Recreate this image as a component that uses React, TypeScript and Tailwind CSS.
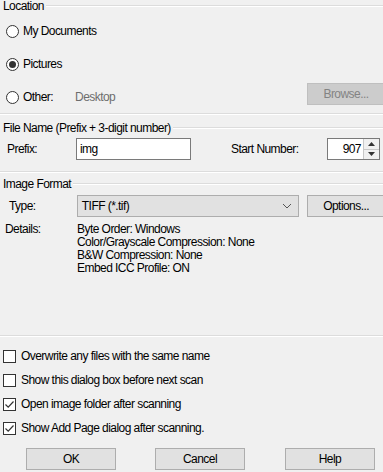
import type { ReactNode } from "react";

function GroupHeader({ title }: { title: string }) {
    return (
        <div className="flex items-center h-[12px]">
            <span className="pl-[3px] pr-[2px] leading-[12px] whitespace-nowrap">{title}</span>
            <div className="flex-1 border-t border-t-[#dcdcdc] border-b border-b-white" />
        </div>
    );
}

function Separator() {
    return <div className="border-t border-t-[#dcdcdc] border-b border-b-white" />;
}

function Radio({ checked, label }: { checked?: boolean; label: string }) {
    return (
        <div className="flex items-center">
            <span className="ml-[6px] w-[13px] h-[13px] rounded-full border border-[#333] bg-white flex items-center justify-center">
                {checked && <span className="w-[7px] h-[7px] rounded-full bg-[#333]" />}
            </span>
            <span className="ml-[4px]">{label}</span>
        </div>
    );
}

function Checkbox({ checked, label }: { checked?: boolean; label: string }) {
    return (
        <div className="flex items-center h-[24px]">
            <span className="ml-[3px] w-[13px] h-[13px] border border-[#333] bg-white flex items-center justify-center">
                {checked && (
                    <svg width="11" height="11" viewBox="0 0 11 11">
                        <path d="M1.5 5.5 L4.2 8.2 L9.5 2.5" fill="none" stroke="#333" strokeWidth="1.2" />
                    </svg>
                )}
            </span>
            <span className="ml-[5px]">{label}</span>
        </div>
    );
}

function Button({ children, className = "" }: { children: ReactNode; className?: string }) {
    return (
        <div className={`h-[22px] flex items-center justify-center bg-[#e1e1e1] border border-[#adadad] ${className}`}>
            {children}
        </div>
    );
}

export default function App() {
    return (
        <div className="w-[383px] h-[472px] overflow-hidden bg-[#f0f0f0] text-black text-[12px] tracking-[-0.55px] font-['Liberation_Sans',Arial,sans-serif]">
            {/* Location */}
            <GroupHeader title="Location" />
            <div className="mt-[7px] h-[24px] flex items-center">
                <Radio label="My Documents" />
            </div>
            <div className="mt-[9px] h-[24px] flex items-center">
                <Radio checked label="Pictures" />
            </div>
            <div className="mt-[7px] flex items-start">
                <div className="h-[28px] flex items-center flex-1">
                    <Radio label="Other:" />
                    <span className="ml-[22px] text-[#6d6d6d]">Desktop</span>
                </div>
                <div className="w-[78px] h-[22px] flex items-center justify-center bg-[#cccccc] border border-[#bfbfbf] text-[#838383] mr-[-2px]">
                    Browse...
                </div>
            </div>
            <div className="mt-[2px]">
                <Separator />
            </div>

            {/* File name */}
            <div className="mt-[7px]">
                <GroupHeader title="File Name (Prefix + 3-digit number)" />
            </div>
            <div className="mt-[4px] h-[22px] flex items-center">
                <span className="ml-[7px] w-[69px]">Prefix:</span>
                <div className="w-[115px] h-[22px] bg-white border border-[#7a7a7a] flex items-center pl-[3px]">img</div>
                <span className="ml-[40px] w-[96px]">Start Number:</span>
                <div className="w-[53px] h-[22px] bg-white border border-[#7a7a7a] flex">
                    <div className="flex-1 flex items-center justify-end pr-[2px]">907</div>
                    <div className="w-[16px] flex flex-col border-l border-[#c8c8c8]">
                        <div className="flex-1 bg-[#f0f0f0] border-b border-[#c8c8c8] flex items-center justify-center">
                            <svg width="7" height="4" viewBox="0 0 7 4"><path d="M0 4 L3.5 0 L7 4 Z" fill="#333" /></svg>
                        </div>
                        <div className="flex-1 bg-[#f0f0f0] flex items-center justify-center">
                            <svg width="7" height="4" viewBox="0 0 7 4"><path d="M0 0 L3.5 4 L7 0 Z" fill="#333" /></svg>
                        </div>
                    </div>
                </div>
            </div>
            <div className="mt-[11px]">
                <Separator />
            </div>

            {/* Image format */}
            <div className="mt-[5px]">
                <GroupHeader title="Image Format" />
            </div>
            <div className="mt-[5px] h-[22px] flex items-center">
                <span className="ml-[9px] w-[68px]">Type:</span>
                <div className="w-[223px] h-[22px] bg-[#e1e1e1] border border-[#adadad] flex items-center pl-[4px]">
                    <span className="flex-1">TIFF (*.tif)</span>
                    <svg width="10" height="6" viewBox="0 0 10 6" className="mr-[6px]">
                        <path d="M1 1 L5 5 L9 1" fill="none" stroke="#555" strokeWidth="1" />
                    </svg>
                </div>
                <Button className="ml-[8px] w-[78px] mr-[-2px]">Options...</Button>
            </div>
            <div className="mt-[6px] flex leading-[13px]">
                <span className="ml-[5px] w-[72px]">Details:</span>
                <div className="flex flex-col">
                    <span>Byte Order: Windows</span>
                    <span>Color/Grayscale Compression: None</span>
                    <span>B&amp;W Compression: None</span>
                    <span>Embed ICC Profile: ON</span>
                </div>
            </div>
            <div className="mt-[60px]">
                <Separator />
            </div>

            {/* Options */}
            <div className="mt-[7px]">
                <Checkbox label="Overwrite any files with the same name" />
                <Checkbox label="Show this dialog box before next scan" />
                <Checkbox checked label="Open image folder after scanning" />
                <Checkbox checked label="Show Add Page dialog after scanning." />
            </div>
            <div className="mt-[8px] flex">
                <Button className="ml-[26px] w-[90px]">OK</Button>
                <Button className="ml-[39px] w-[90px]">Cancel</Button>
                <Button className="ml-[40px] w-[90px]">Help</Button>
            </div>
        </div>
    );
}
